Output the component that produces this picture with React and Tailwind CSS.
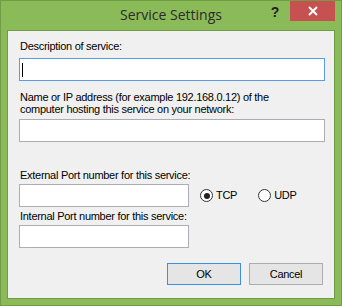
import React from "react";

function TextBox({ className = "", focused, caret }) {
  return (
    <div
      className={`h-[23px] bg-white border ${
        focused ? "border-[#569de5]" : "border-[#abadb3]"
      } flex items-center pl-[2px] ${className}`}
    >
      {caret && <div className="w-[1px] h-[14px] bg-black" />}
    </div>
  );
}

function Radio({ label, checked }) {
  return (
    <div className="flex items-center gap-[3px]">
      <div className="w-[13px] h-[13px] rounded-full border border-[#333] bg-white flex items-center justify-center">
        {checked && <div className="w-[6px] h-[6px] rounded-full bg-[#222]" />}
      </div>
      <span>{label}</span>
    </div>
  );
}

function Button({ children, primary }) {
  return (
    <div
      className={`w-[74px] h-[22px] flex items-center justify-center bg-[#e5e5e5] border ${
        primary ? "border-[#3c8fe0]" : "border-[#adadad]"
      }`}
    >
      {children}
    </div>
  );
}

export default function App() {
  return (
    <div className="w-[342px] h-[306px] bg-[#8bba59] border border-[#6f9c45] flex flex-col font-['Liberation_Sans',Arial,sans-serif] text-[11px] tracking-[-0.28px] text-black">
      {/* title bar */}
      <div className="h-[29px] flex items-start relative">
        <div className="absolute left-0 right-0 top-[4px] text-center font-['Open_Sans',sans-serif] text-[14px] tracking-normal text-[#2b2b2b] leading-[20px]">
          Service Settings
        </div>
        <div className="ml-auto mr-[11px] mt-[4px] font-['Liberation_Sans',sans-serif] font-bold text-[14px] leading-[14px] text-[#222]">
          ?
        </div>
        <div className="w-[45px] h-[20px] bg-[#c75050] mr-[6px] flex items-center justify-center">
          <svg width="10" height="10" viewBox="0 0 10 10">
            <path d="M1 1 L9 9 M9 1 L1 9" stroke="white" strokeWidth="2" />
          </svg>
        </div>
      </div>

      {/* client area */}
      <div className="mx-[6px] border border-[#6f9c45] bg-[#f0f0f0] h-[269px] pt-[9px] pl-[11px] flex flex-col leading-[13px]">
        <div className="pl-[1px]">Description of service:</div>
        <TextBox className="mt-[5px] w-[306px]" focused caret />
        <div className="pl-[1px] mt-[10px] leading-[12px]">
          Name or IP address (for example 192.168.0.12) of the
          <br />
          computer hosting this service on your network:
        </div>
        <TextBox className="mt-[4px] w-[306px]" />
        <div className="pl-[1px] mt-[27px]">External Port number for this service:</div>
        <div className="mt-[2px] flex items-center">
          <TextBox className="w-[170px]" />
          <div className="ml-[11px] flex items-center gap-[21px]">
            <Radio label="TCP" checked />
            <Radio label="UDP" />
          </div>
        </div>
        <div className="pl-[1px] mt-[3px]">Internal Port number for this service:</div>
        <TextBox className="mt-[2px] w-[170px]" />
        <div className="mt-[15px] flex justify-end gap-[8px] pr-[11px]">
          <Button primary>OK</Button>
          <Button>Cancel</Button>
        </div>
      </div>
    </div>
  );
}
